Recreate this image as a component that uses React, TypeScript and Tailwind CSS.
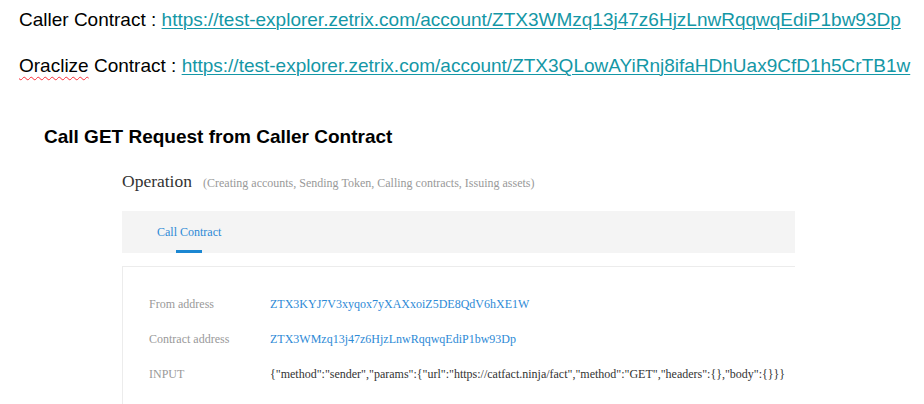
const rows = [
  { label: "From address", value: "ZTX3KYJ7V3xyqox7yXAXxoiZ5DE8QdV6hXE1W", link: true },
  { label: "Contract address", value: "ZTX3WMzq13j47z6HjzLnwRqqwqEdiP1bw93Dp", link: true },
  {
    label: "INPUT",
    value:
      '{"method":"sender","params":{"url":"https://catfact.ninja/fact","method":"GET","headers":{},"body":{}}}',
    link: false,
  },
];

const App: React.FC = () => {
  return (
    <div className="w-[924px] h-[404px] overflow-hidden bg-white">
      <div className="pl-[19px] pt-[9px] font-['Liberation_Sans',Arial,sans-serif] text-[19px] leading-[22px] text-black whitespace-nowrap">
        <p>
          Caller Contract :{" "}
          <a className="text-[#1497a6] underline underline-offset-2 decoration-1">
            https://test-explorer.zetrix.com/account/ZTX3WMzq13j47z6HjzLnwRqqwqEdiP1bw93Dp
          </a>
        </p>
        <p className="mt-[24px]">
          <span className="underline decoration-wavy decoration-red-500 decoration-1 underline-offset-4">
            Oraclize
          </span>{" "}
          Contract :{" "}
          <a className="text-[#1497a6] underline underline-offset-2 decoration-1">
            https://test-explorer.zetrix.com/account/ZTX3QLowAYiRnj8ifaHDhUax9CfD1h5CrTB1w
          </a>
        </p>
      </div>

      <h2 className="mt-[49px] pl-[44px] font-['Liberation_Sans',Arial,sans-serif] text-[19px] leading-[22px] font-bold text-black">
        Call GET Request from Caller Contract
      </h2>

      <div className="ml-[122px] w-[673px] mt-[21px] font-['Liberation_Serif','Times_New_Roman',serif]">
        <div className="flex items-baseline leading-[24px] whitespace-nowrap">
          <span className="text-[17.5px] text-[#333]">Operation</span>
          <span className="ml-[11px] text-[12px] text-[#999]">
            (Creating accounts, Sending Token, Calling contracts, Issuing assets)
          </span>
        </div>

        <div className="mt-[16px] h-[42px] bg-[#f4f4f4] flex pl-[35px]">
          <div className="flex flex-col items-center pt-[13px]">
            <span className="text-[12px] leading-[16px] text-[#2d8ad6]">Call Contract</span>
            <span className="mt-[10px] w-[26px] h-[3px] bg-[#1b87d2]" />
          </div>
        </div>

        <div className="mt-[13px] border-t border-l border-[#ececec] pt-[27px] pl-[26px] pb-[30px]">
          <div className="flex flex-col gap-[15px]">
            {rows.map((row) => (
              <div key={row.label} className="flex text-[12px] leading-[20px] whitespace-nowrap">
                <span className="w-[121px] text-[#999]">{row.label}</span>
                <span className={row.link ? "text-[#2d8ad6]" : "text-[#333]"}>{row.value}</span>
              </div>
            ))}
          </div>
        </div>
      </div>
    </div>
  );
};

export default App;
